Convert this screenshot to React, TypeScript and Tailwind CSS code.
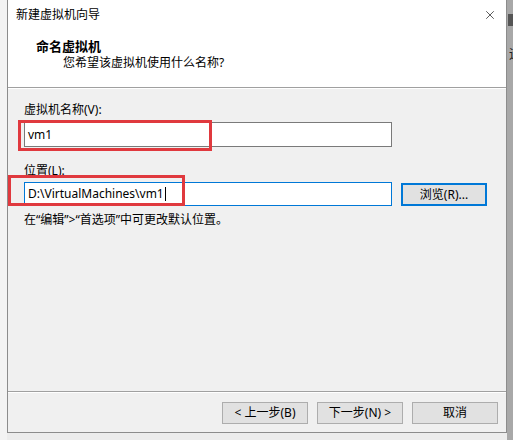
import { X } from "lucide-react"

const font = "font-['Noto_Sans','Noto_Sans_CJK_SC',sans-serif]"

function Btn({ children, primary = false, className = "" }: { children: React.ReactNode; primary?: boolean; className?: string }) {
  return (
    <button
      className={
        "flex h-[22px] w-[86px] items-center justify-center bg-[#e1e1e1] text-[12px] leading-none text-black " +
        (primary ? "border-2 border-[#0078d7] " : "border border-[#adadad] ") +
        className
      }
    >
      {children}
    </button>
  )
}

export default function App() {
  return (
    <div className={`relative flex h-[440px] w-[513px] overflow-hidden bg-[#ececec] ${font} text-[12px] text-black`}>
      <div className="w-[7px] shrink-0 bg-[#f3f3f3]" />
      <div className="flex h-[433px] w-[500px] shrink-0 flex-col border-x border-b border-[#8c8c8c] bg-[#f0f0f0]">
        {/* header */}
        <div className="h-[88px] shrink-0 border-b border-[#a0a0a0] bg-white">
          <div className="flex h-[30px] items-center justify-between pl-[8px] pr-[9px]">
            <span>新建虚拟机向导</span>
            <X className="h-[14px] w-[14px] text-black" strokeWidth={1.1} />
          </div>
          <div className="pl-[28px] pt-[8px] text-[13px] font-bold leading-[16px]">命名虚拟机</div>
          <div className="pl-[55px] leading-[18px]">您希望该虚拟机使用什么名称?</div>
        </div>

        {/* body */}
        <div className="flex flex-1 flex-col border-t border-white pl-[16px]">
          <div className="mt-[12px] leading-[18px]">虚拟机名称(V):</div>
          <div className="mt-[3px] flex h-[25px] w-[368px] items-center border border-[#7a7a7a] bg-white pl-[3px]">vm1</div>
          <div className="mt-[15px] leading-[18px]">位置(L):</div>
          <div className="mt-[2px] flex items-center">
            <div className="flex h-[24px] w-[368px] items-center border border-[#0078d7] bg-white pl-[3px]">
              D:\VirtualMachines\vm1<span className="ml-[1px] h-[14px] w-px bg-black" />
            </div>
            <Btn primary className="ml-[9px] mt-[1px] h-[23px]">浏览(R)...</Btn>
          </div>
          <div className="mt-[5px] leading-[18px]">在“编辑”&gt;“首选项”中可更改默认位置。</div>
        </div>

        {/* footer */}
        <div className="h-[41px] shrink-0 border-t border-[#a0a0a0]">
          <div className="flex h-full justify-end gap-[9px] border-t border-white pr-[8px] pt-[9px]">
            <Btn>&lt; 上一步(B)</Btn>
            <Btn>下一步(N) &gt;</Btn>
            <Btn>取消</Btn>
          </div>
        </div>
      </div>
      <div className="relative w-[6px] shrink-0 bg-[#a8a8a8]">
        <span className="absolute left-[2px] top-[44px] text-[13px] text-[#222]">运</span>
        <span className="absolute left-[1px] top-[14px] h-[12px] w-[5px] bg-[#555]" />
      </div>

      {/* annotation boxes */}
      <div className="pointer-events-none absolute left-[18px] top-[120px] h-[31px] w-[194px] border-[3px] border-[#e0393e]" />
      <div className="pointer-events-none absolute left-[8px] top-[175px] h-[31px] w-[177px] border-[3px] border-[#e0393e]" />
    </div>
  )
}
